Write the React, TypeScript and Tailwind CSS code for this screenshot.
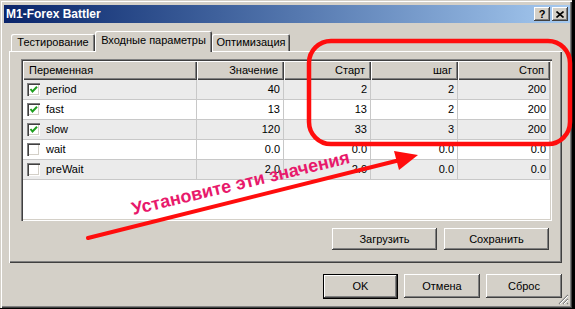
import React from 'react';

// classic win2000 bevels
const raised = 'shadow-[inset_-1px_-1px_#404040,inset_1px_1px_#ffffff,inset_-2px_-2px_#808080,inset_2px_2px_#d4d0c8]';
const sunken = 'shadow-[inset_1px_1px_#808080,inset_2px_2px_#404040,inset_-1px_-1px_#ffffff,inset_-2px_-2px_#d4d0c8]';

interface Row {
  name: string;
  on: boolean;
  value: string;
  start: string;
  step: string;
  stop: string;
}

const rows: Row[] = [
  { name: 'period', on: true, value: '40', start: '2', step: '2', stop: '200' },
  { name: 'fast', on: true, value: '13', start: '13', step: '2', stop: '200' },
  { name: 'slow', on: true, value: '120', start: '33', step: '3', stop: '200' },
  { name: 'wait', on: false, value: '0.0', start: '0.0', step: '0.0', stop: '0.0' },
  { name: 'preWait', on: false, value: '2.0', start: '2.0', step: '0.0', stop: '0.0' },
];

const CheckBox: React.FC<{ on: boolean }> = ({ on }) => (
  <div className={`w-[13px] h-[13px] bg-white ${sunken} flex items-center justify-center`}>
    {on && (
      <svg width="13" height="13" viewBox="0 0 13 13">
        <path d="M3.5 6 L5.5 8.5 L10 3.8" stroke="#1e9e1e" strokeWidth="2" fill="none" />
      </svg>
    )}
  </div>
);

const Tab: React.FC<{ label: string; active?: boolean; w: string }> = ({ label, active, w }) =>
  active ? (
    <div className={`${w} h-[21px] -mb-[1px] relative z-10 bg-[#d4d0c8] rounded-t-[2px] shadow-[inset_1px_1px_#ffffff,inset_-1px_0_#404040,inset_-2px_0_#808080] flex items-center justify-center pb-[2px]`}>
      {label}
    </div>
  ) : (
    <div className={`${w} h-[17px] bg-[#d4d0c8] rounded-t-[2px] shadow-[inset_1px_1px_#ffffff,inset_-1px_0_#404040,inset_-2px_0_#808080] flex items-center justify-center`}>
      {label}
    </div>
  );

const Button: React.FC<{ label: string; w: string; h: string; main?: boolean }> = ({ label, w, h, main }) => (
  <div className={`${w} ${h} bg-[#d4d0c8] ${main ? 'border border-black' : ''} flex`}>
    <div className={`flex-1 ${raised} flex items-center justify-center`}>{label}</div>
  </div>
);

const widths = ['w-[174px]', 'w-[87px]', 'w-[87px]', 'w-[87px]', 'w-[92px]'];

export default function App() {
  return (
    <div className="relative w-[575px] h-[309px] bg-black overflow-hidden font-['Liberation_Sans',Arial,sans-serif] text-[11px] text-black">
      <div className="relative w-[572px] h-[308px] bg-[#d4d0c8] shadow-[inset_1px_1px_#d4d0c8,inset_2px_2px_#ffffff,inset_-1px_-1px_#404040,inset_-2px_-2px_#808080] flex flex-col">
        {/* title bar */}
        <div className="mt-[5px] ml-[4px] mr-[2px] h-[18px] bg-gradient-to-r from-[#0a246a] to-[#a6caf0] flex items-center justify-between pl-[2px] pr-[2px]">
          <span className="text-white font-bold text-[12px]">M1-Forex Battler</span>
          <div className="flex gap-[2px]">
            <div className={`w-[16px] h-[14px] bg-[#d4d0c8] ${raised} flex items-center justify-center font-bold text-[11px] leading-none`}>?</div>
            <div className={`w-[16px] h-[14px] bg-[#d4d0c8] ${raised} flex items-center justify-center`}>
              <svg width="8" height="7" viewBox="0 0 8 7">
                <path d="M0.5 0.5 L7.5 6.5 M7.5 0.5 L0.5 6.5" stroke="#000" strokeWidth="1.6" />
              </svg>
            </div>
          </div>
        </div>

        {/* tabs */}
        <div className="flex items-end h-[20px] mt-[8px] ml-[11px]">
          <Tab label="Тестирование" w="w-[84px]" />
          <Tab label="Входные параметры" w="w-[117px]" active />
          <Tab label="Оптимизация" w="w-[78px]" />
        </div>

        {/* tab page */}
        <div className="ml-[9px] w-[553px] h-[212px] shadow-[inset_1px_1px_#ffffff,inset_-1px_-1px_#404040,inset_-2px_-2px_#808080] flex flex-col">
          <div className={`ml-[12px] mt-[8px] w-[531px] h-[162px] bg-white ${sunken} p-[2px] flex flex-col`}>
            <div className="flex h-[19px]">
              {['Переменная', 'Значение', 'Старт', 'шаг', 'Стоп'].map((h, i) => (
                <div
                  key={h}
                  className={`${widths[i]} h-full bg-[#d4d0c8] shadow-[inset_1px_1px_#ffffff,inset_-1px_-1px_#404040,inset_-2px_-2px_#808080] flex items-center ${i === 0 ? 'pl-[6px]' : 'justify-end pr-[6px]'}`}
                >
                  {h}
                </div>
              ))}
            </div>
            {rows.map((r, idx) => (
              <div key={r.name} className={`flex h-[20px] border-b border-[#c8c8c8] ${idx % 2 === 0 ? 'bg-[#ebebeb]' : 'bg-white'}`}>
                <div className={`${widths[0]} border-r border-[#c8c8c8] flex items-center pl-[4px] gap-[6px]`}>
                  <CheckBox on={r.on} />
                  <span>{r.name}</span>
                </div>
                {[r.value, r.start, r.step, r.stop].map((v, i) => (
                  <div key={i} className={`${widths[i + 1]} border-r border-[#c8c8c8] flex items-center justify-end pr-[3px]`}>
                    {v}
                  </div>
                ))}
              </div>
            ))}
          </div>
          <div className="flex justify-end gap-[7px] mt-[7px] pr-[13px]">
            <Button label="Загрузить" w="w-[105px]" h="h-[22px]" />
            <Button label="Сохранить" w="w-[105px]" h="h-[22px]" />
          </div>
        </div>

        {/* dialog buttons */}
        <div className="flex justify-end gap-[6px] mt-[11px] pr-[10px]">
          <Button label="OK" w="w-[75px]" h="h-[25px]" main />
          <Button label="Отмена" w="w-[76px]" h="h-[24px]" />
          <Button label="Сброс" w="w-[76px]" h="h-[24px]" />
        </div>

        {/* size grip */}
        <svg className="absolute right-[3px] bottom-[3px]" width="11" height="11" viewBox="0 0 11 11">
          <path d="M10 1 L1 10 M10 5 L5 10 M10 9 L9 10" stroke="#808080" strokeWidth="1.2" />
          <path d="M10 2 L2 10 M10 6 L6 10" stroke="#ffffff" strokeWidth="1" />
        </svg>
      </div>

      {/* red annotation overlay */}
      <svg className="absolute left-0 top-0 pointer-events-none" width="575" height="309" viewBox="0 0 575 309">
        <rect x="309" y="41" width="261" height="103" rx="22" ry="22" fill="none" stroke="#ff0d0d" strokeWidth="4.5" />
        <line x1="88" y1="238" x2="400" y2="160" stroke="#ff0d0d" strokeWidth="4" strokeLinecap="round" />
        <polygon points="418,155 394,151 399,170" fill="#ff0d0d" />
      </svg>
      <span className="absolute left-[134px] top-[200px] origin-[0_100%] rotate-[-13.5deg] whitespace-nowrap font-['Liberation_Sans',Arial,sans-serif] font-bold text-[18px] leading-none text-[#e8196b] pointer-events-none">
        Установите эти значения
      </span>
    </div>
  );
}
